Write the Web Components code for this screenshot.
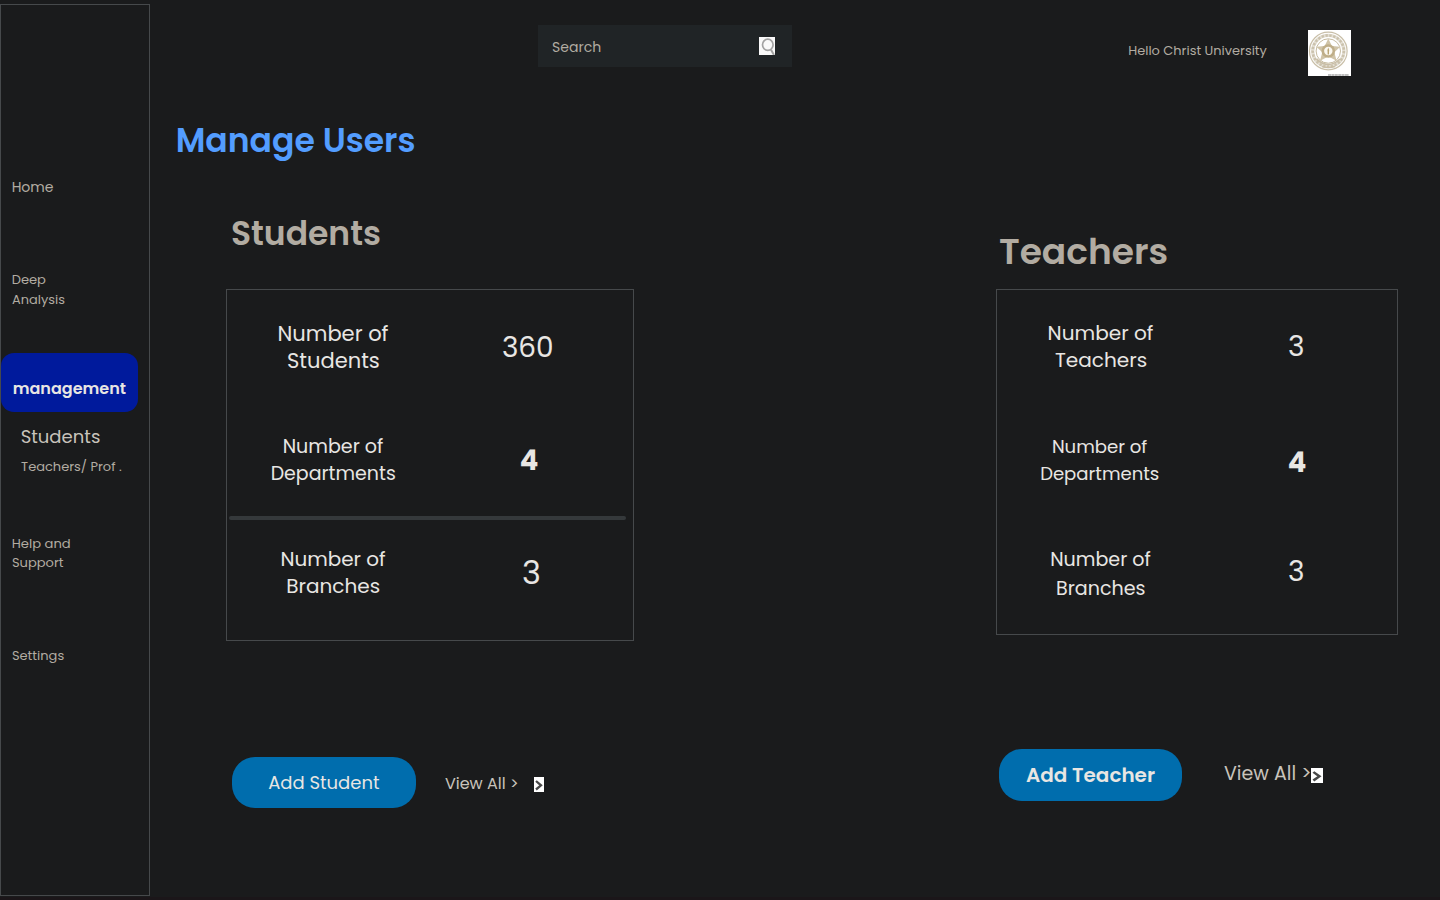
<!DOCTYPE html>
<html lang="en">
<head>
<meta charset="utf-8">
<title>Manage Users</title>
<style>
  html, body { margin: 0; height: 100%; }
  body { background: #1a1b1c; overflow: hidden; font-family: Poppins, Inter, "Open Sans", sans-serif; }
</style>
</head>
<body>
<app-page></app-page>
<script>
const ctx = document.createElement('canvas').getContext('2d');

/* Single line of text, sized so that its glyphs span the given width.
   A line with an explicit size keeps that size. */
class UiText extends HTMLElement {
  connectedCallback() {
    const weight = this.getAttribute('weight') || 400;
    const lh = +this.getAttribute('lh') || 20;
    const width = +this.getAttribute('width');
    const text = this.getAttribute('text');
    ctx.font = `${weight} 1000px Poppins, Inter, "Open Sans", sans-serif`;
    const m = ctx.measureText(text);
    const left = -m.actualBoundingBoxLeft / 1000;
    const ink = (m.actualBoundingBoxRight + m.actualBoundingBoxLeft) / 1000;
    const size = +this.getAttribute('size') || width / ink;
    const root = this.attachShadow({ mode: 'open' });
    root.innerHTML = `<style>
      :host { display: block; flex: none; width: ${width}px; height: ${lh}px; }
      span { display: inline-block; white-space: pre; font-size: ${size}px; font-weight: ${weight};
        line-height: ${lh}px; vertical-align: top; margin-left: ${-left * size}px; }
    </style><span></span>`;
    root.querySelector('span').textContent = text;
  }
}
customElements.define('ui-text', UiText);

const define = (name, html) => customElements.define(name, class extends HTMLElement {
  constructor() {
    super();
    const t = document.createElement('template');
    t.innerHTML = html;
    this.attachShadow({ mode: 'open' }).append(t.content.cloneNode(true));
  }
});

define('side-nav', `<style>
  :host { display: flex; flex-direction: column; box-sizing: border-box; width: 150px; height: 892px; margin-top: 4px;
    border: 1px solid #46494b; color: #b2aca2; }
  .item { padding-left: 11.5px; }
  .active { box-sizing: border-box; width: 137px; height: 59px; margin-top: 43px; padding: 26px 0 0 12.7px; border-radius: 13px; background: #001a9c; color: #e8e6e3; }
  .sub { padding-left: 20.5px; }
</style>
<div class="item" style="margin-top:171.8px"><ui-text text="Home" width="40.5"></ui-text></div>
<div class="item" style="margin-top:73.2px"><ui-text text="Deep" width="33"></ui-text><ui-text text="Analysis" width="52"></ui-text></div>
<div class="active"><ui-text text="management" weight="600" width="112"></ui-text></div>
<div class="sub" style="margin-top:14.7px;color:#c8c3bb"><ui-text text="Students" width="78.2"></ui-text></div>
<div class="sub" style="margin-top:10.3px"><ui-text text="Teachers/ Prof ." width="99.7"></ui-text></div>
<div class="item" style="margin-top:57px"><ui-text text="Help and" lh="19" width="57.3"></ui-text><ui-text text="Support" lh="19" width="50.8"></ui-text></div>
<div class="item" style="margin-top:74.2px"><ui-text text="Settings" width="51.3"></ui-text></div>`);

define('search-box', `<style>
  :host { display: flex; align-items: center; box-sizing: border-box; width: 254px; height: 42px; padding: 2px 17px 0 14.7px; background: #202426; color: #b2aca2; justify-content: space-between; }
  svg { display: block; margin-top: -2px; }
</style><ui-text text="Search" width="47.7"></ui-text>
<svg width="16" height="18" viewBox="0 0 16 18"><rect width="16" height="18" fill="#f9f9f9"/><ellipse cx="8.8" cy="7.8" rx="5.3" ry="5.6" fill="none" stroke="#a2a2a2" stroke-width="1.7"/><path d="M12 12.800l3 5.200" stroke="#a2a2a2" stroke-width="2"/></svg>`);

define('university-crest', `<style>:host { display: block; width: 43px; height: 46px; } svg { display: block; }</style>
<svg width="43" height="46" viewBox="0 0 43 46"><rect width="43" height="46" fill="#fff"/>
<g fill="none">
<circle cx="20.3" cy="21" r="18.8" stroke-width="1.2" stroke="#c9bfa8"/>
<circle cx="20.3" cy="21" r="15.6" stroke-width="3.4" stroke="#e4dfd3"/>
<circle cx="20.3" cy="21" r="15.6" stroke-width="2.6" stroke="#cbc2ad" stroke-dasharray="2.3 1.6"/>
<circle cx="20.3" cy="21" r="12.2" stroke-width="1" stroke="#c6bba0"/></g>
<path d="M20.3 8.5l3.6 7.4 8.4.9-6 5.500 2.300 8.500-8.300-4.200-8.300 4.200 2.300-8.500-6-5.500 8.400-.9z" fill="#d0c4a8"/>
<circle cx="20.3" cy="21" r="6.8" fill="#bfae88"/><circle cx="20.3" cy="21" r="4.2" fill="#fbf8f0"/>
<path d="M20.3 17.500q1.400 2.700.7 4.500v2.500h-1.400v-2.500q-.7-1.800.7-4.500z" fill="#b9a473"/>
<path d="M8.500 29q6 5.500 11.800 5.500T32 29M14 36.500q6 2 13 0" fill="none" stroke="#c9bea6" stroke-width="1.700"/>
<path d="M20 45h21" stroke="#808080" stroke-width="1.200" stroke-dasharray="3 .4"/></svg>`);

define('page-header', `<style>
  :host { display: flex; align-items: flex-start; height: 100px; color: #b2aca2; }
  search-box { margin: 25px 0 0 388px; }
  ui-text { margin: 40.5px 0 0 337px; }
  university-crest { margin: 30px 0 0 41px; }
</style><search-box></search-box><ui-text text="Hello Christ University" width="138"></ui-text><university-crest></university-crest>`);

define('chevron-tile', `<style>:host { display: block; flex: none; width: 10px; height: 15px; } svg { display: block; width: 100%; height: 100%; }</style>
<svg viewBox="0 0 10 15" preserveAspectRatio="none"><rect width="10" height="15" fill="#fff"/><path d="M2 4l5 4.300-5 4.200" fill="none" stroke="#484848" stroke-width="2.300"/></svg>`);

define('pill-button', `<style>:host { display: flex; flex: none; box-sizing: border-box; align-items: center; justify-content: center; border-radius: 23px; background: #006dad; color: #e8e6e3; }</style><slot></slot>`);

define('stat-row', `<style>
  :host { display: flex; align-items: flex-start; color: #e8e6e3; }
  .label { display: flex; flex: none; flex-direction: column; align-items: center; width: var(--label, 213px); }
</style><div class="label"><slot></slot></div><slot name="value"></slot>`);

define('stat-card', `<style>:host { display: flex; flex-direction: column; box-sizing: border-box; border: 1px solid #46494b; }</style><slot></slot>`);

define('app-page', `<style>
  :host { display: grid; grid-template-columns: 150px 1fr; width: 1440px; height: 900px; background: linear-gradient(#1a1b1c 897px, #1b1619 897px); }
  .title { margin: 21px 0 0 27.7px; color: #539dff; }
  .columns { display: flex; align-items: flex-start; margin-top: -1px; }
  section { display: flex; flex-direction: column; }
  .students { width: 408px; margin-left: 76px; }
  .teachers { width: 402px; margin-left: 362px; --label: 208px; }
  .heading { color: #b2aca2; }
  .divider { flex: none; width: 397px; height: 4px; margin-left: 2px; border-radius: 2px; background: #35393b; }
  .actions { display: flex; align-items: center; color: #c8c3bb; }
</style>
<side-nav></side-nav>
<main>
  <page-header></page-header>
  <ui-text class="title" text="Manage Users" weight="600" lh="40" width="236.400"></ui-text>
  <div class="columns">
    <section class="students">
      <ui-text class="heading" style="margin:53.5px 0 0 6.5px" text="Students" weight="600" lh="40" width="147"></ui-text>
      <stat-card style="height:352px;margin-top:35.5px">
        <stat-row style="height:112.5px;margin-top:30.3px"><ui-text text="Number of" lh="27" width="109.500"></ui-text><ui-text text="Students" lh="27" width="91"></ui-text><ui-text slot="value" style="margin:13.2px 0 0 63.200px" text="360" lh="30" width="49"></ui-text></stat-row>
        <stat-row style="height:83.2px"><ui-text text="Number of" lh="27" width="99.300"></ui-text><ui-text text="Departments" lh="27" width="123.300"></ui-text><ui-text slot="value" style="margin:13px 0 0 81px" text="4" size="27.500" weight="700" lh="30" width="17"></ui-text></stat-row>
        <div class="divider"></div>
        <stat-row style="margin-top:26px"><ui-text text="Number of" lh="27" width="103.700"></ui-text><ui-text text="Branches" lh="27" width="92"></ui-text><ui-text slot="value" style="margin:12px 0 0 83.600px" text="3" size="32" lh="30" width="17"></ui-text></stat-row>
      </stat-card>
      <div class="actions" style="margin:116px 0 0 6px">
        <pill-button style="width:184px;height:51px"><ui-text text="Add Student" width="110.500"></ui-text></pill-button>
        <ui-text style="margin:2px 0 0 29.200px" text="View All &gt;" width="72"></ui-text>
        <chevron-tile style="margin:4px 0 0 16.800px"></chevron-tile>
      </div>
    </section>
    <section class="teachers">
      <ui-text class="heading" style="margin:72px 0 0 4px" text="Teachers" weight="600" lh="40" width="166.500"></ui-text>
      <stat-card style="height:346px;margin-top:17px">
        <stat-row style="height:113px;margin-top:30px"><ui-text text="Number of" lh="27" width="104.300"></ui-text><ui-text text="Teachers" lh="27" width="91"></ui-text><ui-text slot="value" style="margin:11.5px 0 0 84.300px" text="3" size="28" lh="30" width="16"></ui-text></stat-row>
        <stat-row style="height:111.800px;--label:206px"><ui-text text="Number of" lh="27" width="94"></ui-text><ui-text text="Departments" lh="27" width="117.500"></ui-text><ui-text slot="value" style="margin:14.800px 0 0 86px" text="4" size="27.500" weight="700" lh="30" width="17"></ui-text></stat-row>
        <stat-row><ui-text text="Number of" lh="29" width="99.300"></ui-text><ui-text text="Branches" lh="29" width="87.700"></ui-text><ui-text slot="value" style="margin:12.500px 0 0 84.300px" text="3" size="28" lh="30" width="16"></ui-text></stat-row>
      </stat-card>
      <div class="actions" style="margin:114px 0 0 3px">
        <pill-button style="width:183px;height:52px"><ui-text text="Add Teacher" weight="600" width="128.500"></ui-text></pill-button>
        <ui-text style="margin:-3px 0 0 42.300px" text="View All &gt;" width="85.500"></ui-text>
        <chevron-tile style="width:12px;margin:1px 0 0 1.200px"></chevron-tile>
      </div>
    </section>
  </div>
</main>`);
</script>
</body>
</html>
